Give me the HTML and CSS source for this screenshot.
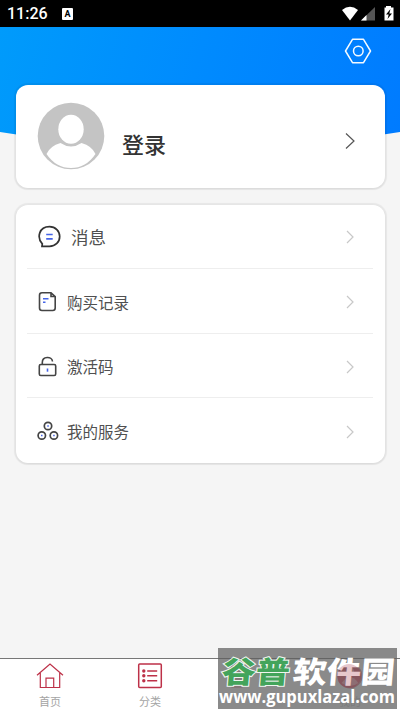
FILE: index.html
```html
<!DOCTYPE html>
<html lang="zh-CN">
<head>
<meta charset="utf-8">
<title>我的</title>
<link rel="stylesheet" href="styles.css">
</head>
<body>
<div class="app">
  <header class="status">
    <span class="time">11:26</span>
    <span class="badge-a">A</span>
    <svg class="status-icons" width="54" height="18" viewBox="0 0 54 18">
      <path d="M1 5Q9-1.500 17 5L9 15.500Z" fill="#fff"/>
      <path d="M34 2V15.500H20Z" fill="#555"/>
      <path d="M25.500 10V15.500H20Z" fill="#fff"/>
      <path d="M45 1h5v1.500h2.500V15.500h-9V2.500H45Z" fill="#fff"/>
      <path d="M49.500 4l-4.500 5.500h2.700l-1.200 4.500 4.500-5.500h-2.700Z" fill="#000"/>
    </svg>
  </header>
  <main class="page">
    <div class="hero">
      <svg class="settings" width="28" height="26" viewBox="0 0 28 26" fill="none" stroke="#f4faff" stroke-width="1.500" stroke-linejoin="round">
        <path d="M8.500 1.300h11L26.500 13l-7 11.700h-11L1.500 13Z"/>
        <circle cx="14.300" cy="13" r="4.800"/>
      </svg>
    </div>
    <section class="card profile">
      <svg class="avatar" width="68" height="68" viewBox="0 0 68 68">
        <circle cx="34" cy="34" r="33.300" fill="#c4c4c4"/>
        <ellipse cx="34" cy="27.200" rx="12.700" ry="14.500" fill="#fff"/>
        <path d="M9.500 52Q13 44 23.500 41Q34 48 44.500 41Q55 44 58.500 52Q49 66 34 66T9.500 52Z" fill="#fff"/>
      </svg>
      <span class="login">登录</span>
      <svg class="arrow big" width="12" height="18" viewBox="0 0 12 18"><path d="M2 1.500L10 9L2 16.500"/></svg>
    </section>
    <section class="card menu">
      <div class="row first">
        <svg class="icon" width="24" height="24" viewBox="0 0 24 24" fill="none" stroke="#333" stroke-width="1.700">
          <path d="M5 21.300L5.300 18.800C-.5 12.500 2 1.700 12.500 1.700C18.500 1.700 22.700 6 22.700 11.500S18.500 21.300 12.500 21.300Z"/>
          <path d="M9.200 9.500h6.500M9.200 13.800h6.500" stroke="#4564e8"/>
        </svg>
        <span>消息</span>
        <svg class="arrow" width="10" height="14" viewBox="0 0 10 14"><path d="M2 1L8 7L2 13"/></svg>
      </div>
      <div class="row">
        <svg class="icon" width="22" height="22" viewBox="0 0 22 22" fill="none" stroke="#444" stroke-width="1.600">
          <path d="M5 1.800h9L18.200 5.500v11.500q0 2.500-2.500 2.500H5q-2.500 0-2.500-2.500V4.300Q2.500 1.800 5 1.800ZM14 2V5.500h4"/>
          <path d="M6 7.700h5.500M6 11.300h2.500" stroke="#4564e8"/>
        </svg>
        <span>购买记录</span>
        <svg class="arrow" width="10" height="14" viewBox="0 0 10 14"><path d="M2 1L8 7L2 13"/></svg>
      </div>
      <div class="row">
        <svg class="icon" width="22" height="22" viewBox="0 0 22 22" fill="none" stroke="#444" stroke-width="1.600">
          <rect x="2.300" y="8.500" width="16.400" height="11" rx="1.500"/>
          <path d="M5.300 8.500V6.500C5.300 0 15 0 15.500 5.500"/>
          <path d="M10.500 12.500v3.200" stroke="#4564e8"/>
        </svg>
        <span>激活码</span>
        <svg class="arrow" width="10" height="14" viewBox="0 0 10 14"><path d="M2 1L8 7L2 13"/></svg>
      </div>
      <div class="row">
        <svg class="icon" width="22" height="22" viewBox="0 0 22 22" fill="none" stroke="#444" stroke-width="1.700">
          <circle cx="11" cy="5" r="3.700"/><circle cx="4.800" cy="14.500" r="3.700"/><circle cx="16.900" cy="14.500" r="3.700"/>
          <path d="M10.300 5h1.500M4 14.500h1.500M16.200 14.500h1.500" stroke="#4564e8"/>
        </svg>
        <span>我的服务</span>
        <svg class="arrow" width="10" height="14" viewBox="0 0 10 14"><path d="M2 1L8 7L2 13"/></svg>
      </div>
    </section>
  </main>
  <nav class="tabs">
    <div class="tab">
      <svg width="28" height="28" viewBox="0 0 28 28" fill="none" stroke="#bd3148" stroke-width="1.200">
        <path d="M1 13.300L14 2L27 13.300M4.300 11V25.500H23.700V11M10 25.500V16.200h7.700v9.300"/>
      </svg>
      <span>首页</span>
    </div>
    <div class="tab">
      <svg width="28" height="28" viewBox="0 0 28 28" fill="none" stroke="#bd3148" stroke-width="1.500">
        <rect x="2.700" y="1.900" width="22.600" height="23.600" rx="1"/>
        <path d="M11.200 9h10M11.200 13.800h10M11.200 18.800h10"/>
        <g fill="#bd3148" stroke="none"><circle cx="7.800" cy="9" r="1.700"/><circle cx="7.800" cy="13.800" r="1.700"/><circle cx="7.800" cy="18.800" r="1.700"/></g>
      </svg>
      <span>分类</span>
    </div>
    <div class="tab third">
      <svg width="28" height="28" viewBox="0 0 28 28" fill="none" stroke="#bd3148" stroke-width="1.200"><rect x="3" y="2" width="10" height="23"/><path d="M3 9h10M3 17h10"/></svg>
    </div>
    <div class="tab">
      <svg width="28" height="28" viewBox="0 0 28 28"><circle cx="14" cy="14" r="12.500" fill="#bd3148"/><circle cx="14" cy="9.500" r="4" fill="#eee"/><path d="M5.500 21Q14 9 22.500 21Q14 27 5.500 21" fill="#eee"/></svg>
      <span>我的</span>
    </div>
  </nav>
  <svg class="watermark" width="179" height="61" viewBox="0 0 179 61">
    <rect width="179" height="61" fill="#737373" fill-opacity=".84"/>
    <path d="M0 10.500H179" stroke="#555" stroke-opacity=".5"/>
    <g transform="translate(1 35.200) skewX(-5)">
      <text class="mark green" x="2" y="0" textLength="68" lengthAdjust="spacingAndGlyphs">谷普</text>
      <text class="mark" x="73" y="0" textLength="102" lengthAdjust="spacingAndGlyphs">软件园</text>
    </g>
    <circle cx="131" cy="28" r="12" fill="#9b1e32" fill-opacity=".25"/>
    <text class="domain" x="1" y="55" textLength="176" lengthAdjust="spacingAndGlyphs">www.gupuxlazal.com</text>
  </svg>
</div>
</body>
</html>
```
FILE: styles.css
```css
* { box-sizing: border-box; }

body {
  margin: 0;
  font-family: "Noto Sans", "Noto Sans CJK SC", sans-serif;
}

.app {
  position: relative;
  width: 400px;
  height: 712px;
  display: flex;
  flex-direction: column;
  background: #f5f5f5;
  overflow: hidden;
}

.status {
  height: 27px;
  flex: none;
  display: flex;
  align-items: center;
  padding: 0 5px 0 7px;
  background: #000;
  color: #fff;
}

.time {
  width: 55px;
  font: 500 16px/29px Roboto, sans-serif;
}

.badge-a {
  width: 11px;
  height: 12px;
  border-radius: 1px;
  background: #fff;
  color: #000;
  font: bold 9px/12px Roboto, sans-serif;
  text-align: center;
}

.status-icons { margin-left: auto; }

.page { flex: 1; }

.hero {
  height: 115px;
  display: flex;
  justify-content: flex-end;
  padding: 11px 28px;
  background: linear-gradient(105deg, #009bfb, #008bfe 48%, #007bff);
  clip-path: ellipse(800px 500px at 50% -379px);
}

.card {
  margin: 0 15.5px;
  border-radius: 12px;
  background: #fff;
  box-shadow: 0 0 1px 2px rgba(0, 0, 0, .06), 0 1px 2px rgba(0, 0, 0, .06);
}

.profile {
  position: relative;
  margin-top: -57px;
  height: 103px;
  display: flex;
  align-items: center;
  padding: 0 29px 0 21.5px;
}

.avatar { margin-bottom: 1px; }

.login {
  margin: 14px 0 0 17px;
  font-size: 22px;
  line-height: 30px;
  font-weight: 500;
  color: #333;
}

.arrow {
  margin-left: auto;
  fill: none;
  stroke: #c8c8c8;
  stroke-width: 1.2;
}

.arrow.big {
  margin-top: 9px;
  stroke: #555;
  stroke-width: 1.2;
}

.menu {
  margin-top: 17px;
  height: 258px;
  padding: 0 11.5px;
}

.row {
  height: 64.67px;
  display: flex;
  align-items: center;
  padding: 3px 18px 0 10px;
  border-bottom: 1px solid #eee;
  font-size: 15.5px;
  color: #505050;
}

.row:last-child { border: 0; padding-top: 2px; }

.row span { margin-left: 8px; }

.row.first { height: 64px; padding-top: 0; }

.row.first span { margin-left: 10px; font-size: 17.5px; }

.tabs {
  height: 54px;
  flex: none;
  display: flex;
  border-top: 1px solid #777;
  background: #fff;
}

.tab {
  width: 100px;
  padding-top: 3px;
  display: flex;
  flex-direction: column;
  align-items: center;
  font-size: 11px;
  line-height: 16px;
  color: #a4a4a4;
}

.tab span { margin-top: 4px; }

.third svg { margin-right: 14px; }

.watermark {
  position: absolute;
  left: 218px;
  top: 648px;
}

.mark {
  font: 900 30px "Noto Sans CJK SC", sans-serif;
  fill: #fff;
}

.green {
  fill: #43a45b;
  stroke: #f0f5f0;
  stroke-width: 2px;
  paint-order: stroke;
}

.domain {
  font: bold 17.5px "Open Sans", sans-serif;
  fill: #fff;
}
```
